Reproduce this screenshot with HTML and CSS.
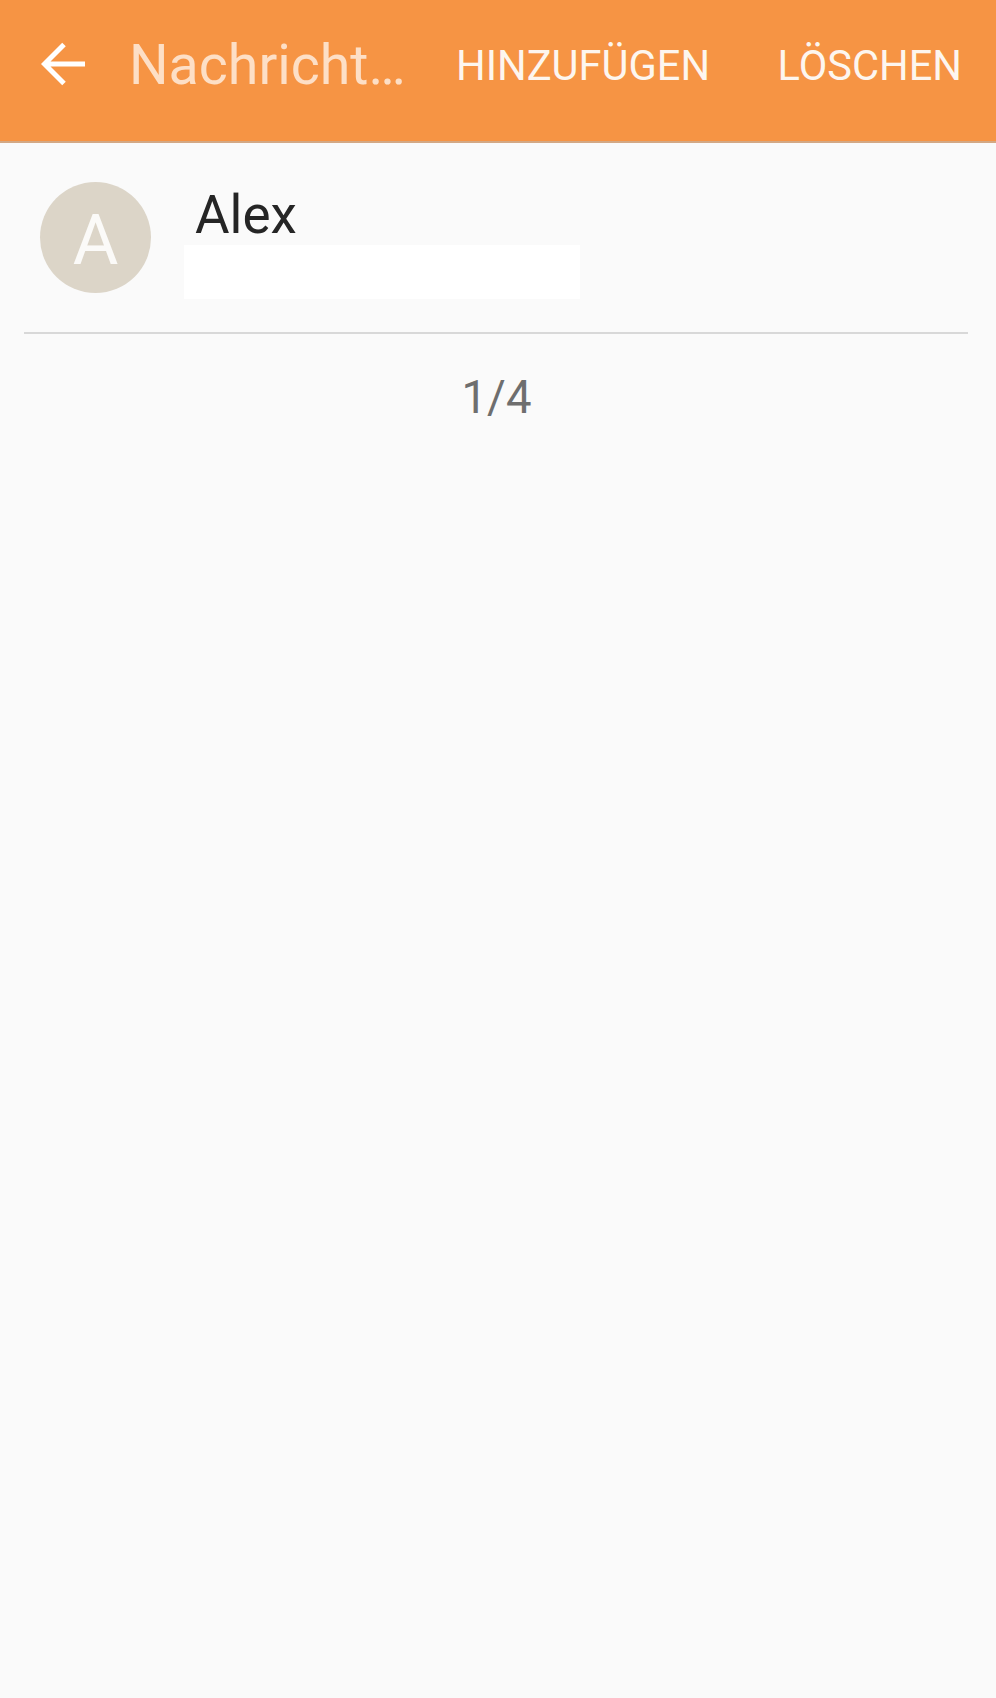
FILE: index.html
```html
<!DOCTYPE html>
<html lang="de">
<head>
<meta charset="utf-8">
<title>Nachricht</title>
<link rel="stylesheet" href="styles.css">
</head>
<body>
<header class="bar">
  <svg class="back" viewBox="0 0 44 44" aria-hidden="true"><path d="M44 22H4M23 2.500 3.500 22 23 41.500"/></svg>
  <h1 class="title">Nachricht…</h1>
  <button class="action add">HINZUFÜGEN</button>
  <button class="action del">LÖSCHEN</button>
</header>
<main>
  <section class="contact">
    <div class="avatar">A</div>
    <div class="info">
      <div class="name">Alex</div>
      <div class="blank"></div>
    </div>
  </section>
  <div class="rule"></div>
  <p class="count">1/4</p>
</main>
</body>
</html>
```

FILE: styles.css
```css
* { box-sizing: border-box; }
html, body { margin: 0; height: 100%; }
body { background: #fafafa; font-family: Roboto, "Liberation Sans", sans-serif; overflow: hidden; }
.bar { display: flex; align-items: center; height: 143px; padding: 0 34px 14px 41px; background: #f69444; border-bottom: 2px solid #d3a884; color: #fff; }
.back { width: 44px; height: 44px; flex: none; fill: none; stroke: #fff; stroke-width: 5; }
.title { margin: 3px 0 0 44px; font-size: 55.5px; font-weight: 400; color: #fddfc6; white-space: nowrap; width: 327px; }
.action { margin-top: 3px; padding: 0; border: 0; background: none; color: #fdf6ef; font: 400 41.6px Roboto, sans-serif; white-space: nowrap; }
.del { margin-left: auto; }
.contact { display: flex; height: 189px; padding: 39px 0 0 40px; }
.avatar { width: 111px; height: 111px; border-radius: 50%; background: #dcd5c8; color: #fbfaf8; font-size: 70px; line-height: 117px; text-align: center; }
.info { margin-left: 33px; }
.name { padding-left: 11px; height: 63px; font-size: 53px; line-height: 67px; color: #252525; }
.blank { width: 396px; height: 54px; background: #fff; }
.rule { height: 2px; margin: 0 28px 0 24px; background: #d8d8d8; }
.count { margin: 37px 3px 0 0; text-align: center; font-size: 45.5px; line-height: 54px; color: #6e6e6e; }
```
